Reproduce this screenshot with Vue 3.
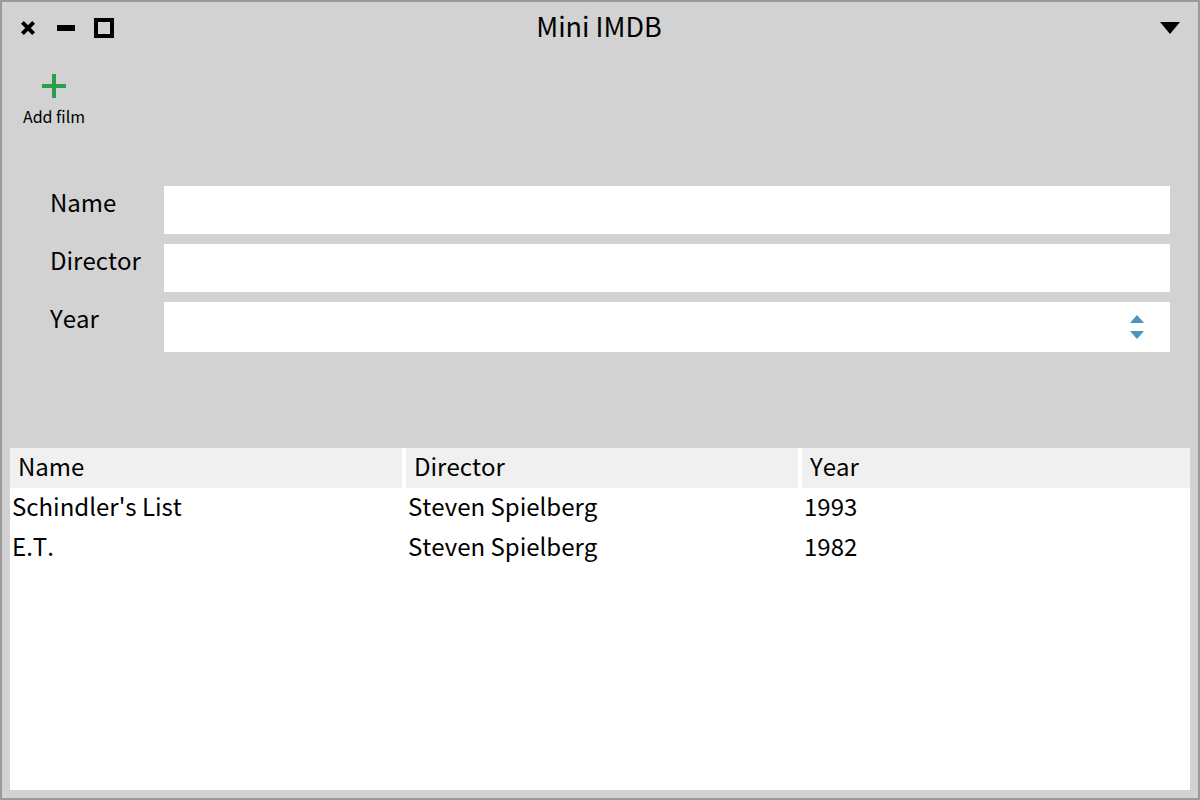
<script setup>
import { ref } from 'vue'

const name = ref('')
const director = ref('')
const year = ref('')

const films = ref([
  { name: "Schindler's List", director: 'Steven Spielberg', year: 1993 },
  { name: 'E.T.', director: 'Steven Spielberg', year: 1982 },
])

function addFilm() {
  if (!name.value) return
  films.value.push({ name: name.value, director: director.value, year: year.value })
}

function stepYear(delta) {
  year.value = Number(year.value || 0) + delta
}
</script>

<template>
  <main class="window">
    <header class="titlebar">
      <div class="controls">
        <button type="button" aria-label="Close">
          <svg width="20" height="20" viewBox="0 0 20 20">
            <path d="M4.4 4.4 15.6 15.6M15.6 4.4 4.4 15.6" stroke="#000" stroke-width="4" />
          </svg>
        </button>
        <button type="button" aria-label="Minimize">
          <svg width="20" height="20" viewBox="0 0 20 20"><path d="M1 7h18v6H1z" /></svg>
        </button>
        <button type="button" aria-label="Maximize">
          <svg width="20" height="20" viewBox="0 0 20 20">
            <path d="M2 2h16v16H2z" fill="none" stroke="#000" stroke-width="4" />
          </svg>
        </button>
      </div>
      <h1>Mini IMDB</h1>
      <button class="menu" type="button" aria-label="Window menu">
        <svg width="20" height="12" viewBox="0 0 20 12"><path d="M0 0h20L10 12z" /></svg>
      </button>
    </header>

    <div class="toolbar">
      <button type="button" @click="addFilm">
        <svg width="24" height="24" viewBox="0 0 24 24">
          <path d="M10 0h4v10h10v4H14v10h-4V14H0v-4h10z" fill="#2a9f47" />
        </svg>
        <span>Add film</span>
      </button>
    </div>

    <form class="form" @submit.prevent="addFilm">
      <label for="name">Name</label>
      <input id="name" v-model="name" type="text" />
      <label for="director">Director</label>
      <input id="director" v-model="director" type="text" />
      <label for="year">Year</label>
      <div class="spinner">
        <input id="year" v-model="year" type="text" inputmode="numeric" />
        <div class="steps">
          <button type="button" aria-label="Increase year" @click="stepYear(1)">
            <svg width="14" height="8" viewBox="0 0 14 8"><path d="M7 0l7 8H0z" fill="#4a94be" /></svg>
          </button>
          <button type="button" aria-label="Decrease year" @click="stepYear(-1)">
            <svg width="14" height="8" viewBox="0 0 14 8"><path d="M0 0h14L7 8z" fill="#4a94be" /></svg>
          </button>
        </div>
      </div>
    </form>

    <section class="list">
      <table>
        <thead>
          <tr>
            <th scope="col">Name</th>
            <th scope="col">Director</th>
            <th scope="col">Year</th>
          </tr>
        </thead>
        <tbody>
          <tr v-for="(film, i) in films" :key="i">
            <td>{{ film.name }}</td>
            <td>{{ film.director }}</td>
            <td>{{ film.year }}</td>
          </tr>
        </tbody>
      </table>
    </section>
  </main>
</template>

<style>
body {
  margin: 0;
}
</style>

<style scoped>
.window {
  box-sizing: border-box;
  min-height: 100vh;
  display: flex;
  flex-direction: column;
  padding: 0 8px 8px;
  border: 2px solid #9b9b9b;
  background: #d2d2d2;
  color: #000;
  font-family: "Noto Sans CJK SC", "Noto Sans", sans-serif;
  font-size: 24px;
  font-kerning: none;
  line-height: 36px;
}

button {
  display: block;
  margin: 0;
  padding: 0;
  border: 0;
  background: none;
  color: inherit;
  font: inherit;
}

svg {
  display: block;
}

.titlebar {
  display: grid;
  grid-template-columns: 1fr auto 1fr;
  align-items: center;
  height: 52px;
  padding: 0 10px 0 8px;
}

.controls {
  display: flex;
  gap: 18px;
}

h1 {
  margin: 0;
  padding-bottom: 4px;
  font-size: 27px;
  font-weight: 400;
}

.menu {
  justify-self: end;
}

.toolbar {
  display: flex;
  padding: 20px 12px 0;
}

.toolbar button {
  display: flex;
  flex-direction: column;
  align-items: center;
  gap: 8px;
  min-width: 64px;
  font-size: 16px;
  line-height: 20px;
}

.form {
  display: grid;
  grid-template-columns: auto 1fr;
  row-gap: 10px;
  padding: 60px 20px 96px 40px;
}

.form label {
  width: 114px;
  line-height: 32px;
}

.form input {
  box-sizing: border-box;
  width: 100%;
  min-width: 0;
  height: 48px;
  padding: 0 8px;
  border: 0;
  border-radius: 0;
  outline: 0;
  background: #fff;
  color: inherit;
  font: inherit;
}

.spinner {
  display: flex;
  align-items: center;
  height: 50px;
  padding-right: 26px;
  background: #fff;
}

.steps {
  display: grid;
  gap: 8px;
}

.list {
  flex: 1;
  background: #fff;
}

table {
  width: 100%;
  table-layout: fixed;
  border-spacing: 0;
}

th,
td {
  padding: 0 2px 4px;
  font-weight: 400;
  text-align: left;
}

th {
  box-sizing: border-box;
  width: 33.56%;
  padding: 0 8px 4px;
  border-right: 4px solid #fff;
  background: #f0f0f0;
}

th:last-child {
  width: auto;
  border-right: 0;
}
</style>
